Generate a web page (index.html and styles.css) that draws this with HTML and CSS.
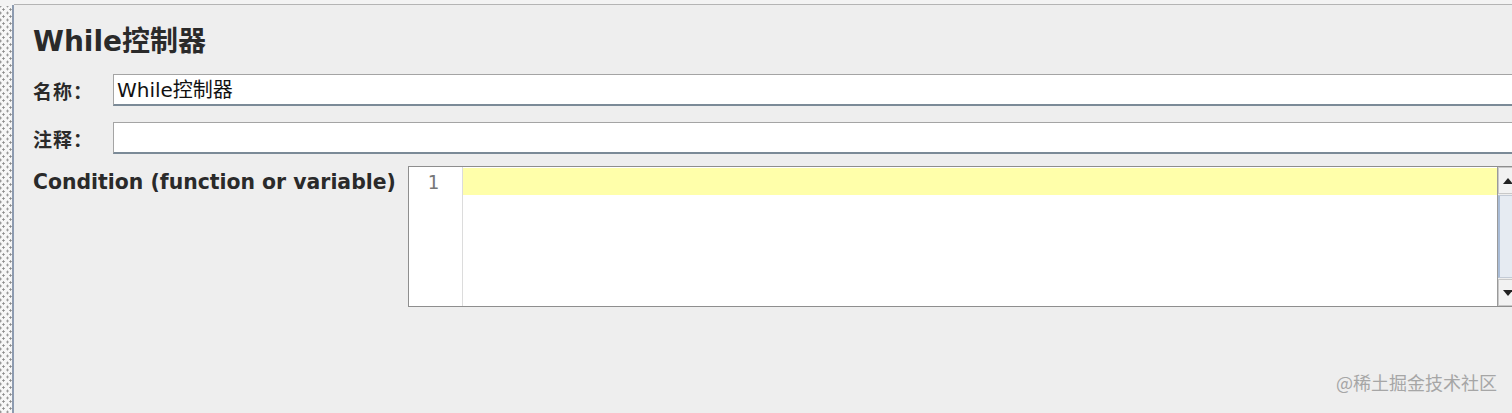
FILE: index.html
```html
<!DOCTYPE html>
<html>
<head>
<meta charset="UTF-8">
<title>While控制器</title>
<link rel="stylesheet" href="styles.css">
</head>
<body>
	<div class="frame">
		<div class="splitter"></div>
		<div class="divider"></div>
		<div class="panel">
			<h2 class="title">While控制器</h2>
			<div class="row">
				<label class="label">名称：</label>
				<div class="field">While控制器</div>
			</div>
			<div class="row">
				<label class="label">注释：</label>
				<div class="field"></div>
			</div>
			<div class="cond">
				<label class="cond-label">Condition (function or variable)</label>
				<div class="editor">
					<div class="gutter">1</div>
					<div class="code">
						<div class="current-line"></div>
					</div>
					<div class="scrollbar">
						<div class="sb-btn"><span class="arrow-up"></span></div>
						<div class="sb-track"><div class="sb-thumb"></div></div>
						<div class="sb-btn"><span class="arrow-down"></span></div>
					</div>
				</div>
			</div>
		</div>
	</div>
	<div class="watermark">@稀土掘金技术社区</div>
</body>
</html>
```
FILE: styles.css
```css
body {
	margin: 0;
	background: #eeeeee;
	font-family: "DejaVu Sans", "Noto Sans CJK SC", sans-serif;
	color: #222;
	overflow: hidden;
}
.frame {
	display: flex;
	height: 413px;
	background: #f3f3f3;
}
.splitter {
	width: 12px;
	margin-top: 6px;
	background-color: #f6f6f6;
	background-image: radial-gradient(circle, #8a8a8a 0.9px, transparent 1.3px),
		radial-gradient(circle, #8a8a8a 0.9px, transparent 1.3px);
	background-size: 7px 7px, 7px 7px;
	background-position: 0px 0px, 4px 3.5px;
}
.divider {
	width: 2px;
	margin-top: 5px;
	background: #8d9bb0;
}
.panel {
	flex: 1;
	margin-top: 4px;
	border-top: 1px solid #b4b4b4;
	background: #eeeeee;
	padding-left: 19px;
	overflow: hidden;
	min-width: 0;
}
.title {
	margin: 20px 0 15px 0;
	font-size: 28px;
	line-height: 34px;
	font-weight: bold;
	color: #2a2a2a;
}
.row {
	display: flex;
	align-items: center;
	height: 32px;
	margin-bottom: 16px;
}
.label {
	width: 80px;
	flex: none;
	font-size: 19px;
	font-weight: bold;
	color: #2a2a2a;
	letter-spacing: 1px;
}
.field {
	flex: 1;
	height: 32px;
	box-sizing: border-box;
	background: #fff;
	border-top: 1px solid #a4a4a4;
	border-left: 1px solid #a4a4a4;
	border-bottom: 2px solid #7b8a97;
	padding-left: 3px;
	font-size: 20px;
	line-height: 30px;
	color: #111;
}
.cond {
	display: flex;
	margin-top: -4px;
}
.cond-label {
	width: 375px;
	flex: none;
	font-size: 20.4px;
	font-weight: bold;
	color: #2a2a2a;
	padding-top: 4px;
}
.editor {
	flex: 1;
	display: flex;
	height: 141px;
	box-sizing: border-box;
	border: 1px solid #8e8e8e;
	border-right: none;
	background: #fff;
	margin-right: -6px;
}
.gutter {
	width: 54px;
	flex: none;
	border-right: 1px solid #dcdcdc;
	box-sizing: border-box;
	text-align: right;
	padding-right: 23px;
	padding-top: 2px;
	font-family: "DejaVu Sans Mono", monospace;
	font-size: 19px;
	line-height: 27px;
	color: #777;
}
.code {
	flex: 1;
	padding-top: 1px;
}
.current-line {
	height: 27px;
	background: #ffffaa;
}
.scrollbar {
	width: 20px;
	flex: none;
	border-left: 1px solid #9a9a9a;
	display: flex;
	flex-direction: column;
	background: #eeeeee;
}
.sb-btn {
	height: 27px;
	box-sizing: border-box;
	border: 1px solid #c8c8c8;
	background: #f2f2f2;
	display: flex;
	align-items: center;
	justify-content: center;
}
.sb-track {
	flex: 1;
	padding: 1px 0;
	display: flex;
}
.sb-thumb {
	flex: 1;
	border-left: 2px solid #a9bcd6;
	background: #e6ebf2;
	border-top: 1px solid #c4cbd6;
	border-bottom: 1px solid #c4cbd6;
}
.arrow-up {
	width: 0;
	height: 0;
	border-left: 5px solid transparent;
	border-right: 5px solid transparent;
	border-bottom: 6px solid #222;
}
.arrow-down {
	width: 0;
	height: 0;
	border-left: 5px solid transparent;
	border-right: 5px solid transparent;
	border-top: 6px solid #222;
}
.watermark {
	position: absolute;
	right: 15px;
	bottom: 18px;
	font-family: "Noto Sans CJK SC", sans-serif;
	font-size: 18px;
	color: #a6a6a6;
}
```
